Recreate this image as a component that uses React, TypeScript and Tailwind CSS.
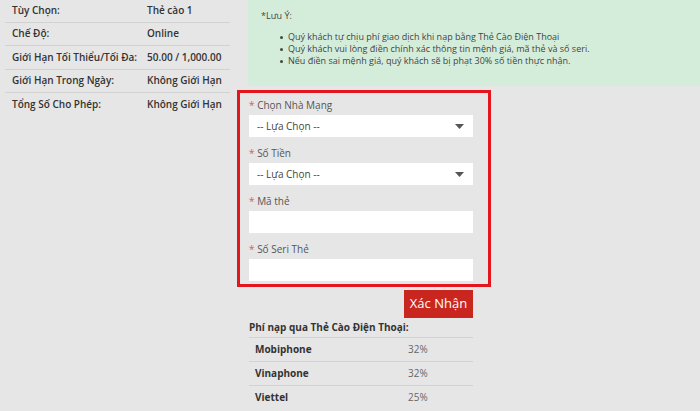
import React from "react";

const leftRows: [string, string][] = [
  ["Tùy Chọn:", "Thẻ cào 1"],
  ["Chế Độ:", "Online"],
  ["Giới Hạn Tối Thiểu/Tối Đa:", "50.00 / 1,000.00"],
  ["Giới Hạn Trong Ngày:", "Không Giới Hạn"],
  ["Tổng Số Cho Phép:", "Không Giới Hạn"],
];

const notes = [
  "Quý khách tự chịu phí giao dịch khi nạp bằng Thẻ Cào Điện Thoại",
  "Quý khách vui lòng điền chính xác thông tin mệnh giá, mã thẻ và số seri.",
  "Nếu điền sai mệnh giá, quý khách sẽ bị phạt 30% số tiền thực nhận.",
];

const fees: [string, string][] = [
  ["Mobiphone", "32%"],
  ["Vinaphone", "32%"],
  ["Viettel", "25%"],
];

function Label({ text }: { text: string }) {
  return (
    <div className="h-4 leading-4 text-[10px] text-[#555]">
      <span className="text-[#e05a5a]">*</span> {text}
    </div>
  );
}

function Select() {
  return (
    <div className="mt-[2px] h-[22px] w-[224px] bg-white flex items-center justify-between pl-[8px] pr-[9px] text-[10px] text-[#444]">
      <span>-- Lựa Chọn --</span>
      <svg width="9" height="5" viewBox="0 0 9 5">
        <path d="M0 0 L9 0 L4.5 5 Z" fill="#555" />
      </svg>
    </div>
  );
}

function Input() {
  return <div className="mt-[2px] h-[22px] w-[224px] bg-white" />;
}

export default function App() {
  return (
    <div className="w-[700px] h-[411px] overflow-hidden bg-[#e6e6e6] flex font-['Open_Sans',sans-serif] text-[#333]">
      <div className="w-[230px] shrink-0 pl-[5px]">
        {leftRows.map(([a, b], i) => (
          <div
            key={i}
            className={
              i === 0
                ? "flex items-center h-[22.5px] border-b border-[#d2d2d2] pl-[7px] text-[10px] font-semibold"
                : i < 4
                ? "flex items-center h-[23.5px] border-b border-[#d2d2d2] pl-[7px] text-[10px] font-semibold"
                : "flex items-center h-[23.5px] pl-[7px] text-[10px] font-semibold"
            }
          >
            <span className="w-[135px] shrink-0">{a}</span>
            <span>{b}</span>
          </div>
        ))}
      </div>
      <div className="flex-1 flex flex-col">
        <div className="ml-[18px] h-[86px] bg-[#d4edda] pl-[13px] pt-[8px] text-[9px] text-[#444]">
          <div className="h-4 leading-4">*Lưu Ý:</div>
          <div className="mt-[7px]">
            {notes.map((n, i) => (
              <div key={i} className="flex items-center h-[12px] leading-[12px]">
                <span className="ml-[19px] w-[3px] h-[3px] rounded-full bg-[#444] shrink-0" />
                <span className="ml-[5px]">{n}</span>
              </div>
            ))}
          </div>
        </div>
        <div className="ml-[7px] mt-[4px] w-[254px] border-[3px] border-[#e3161d] pt-[4px] pl-[9px] pb-[3px]">
          <Label text="Chọn Nhà Mạng" />
          <Select />
          <div className="mt-[8px]">
            <Label text="Số Tiền" />
            <Select />
          </div>
          <div className="mt-[8px]">
            <Label text="Mã thẻ" />
            <Input />
          </div>
          <div className="mt-[8px]">
            <Label text="Số Seri Thẻ" />
            <Input />
          </div>
        </div>
        <div className="ml-[19px] w-[224px] flex flex-col">
          <button className="self-end mt-[3px] h-[28px] w-[69px] bg-[#c8261f] text-white text-[13px] flex items-center justify-center">
            Xác Nhận
          </button>
          <div className="h-[19px] leading-[19px] text-[10px] font-bold">
            Phí nạp qua Thẻ Cào Điện Thoại:
          </div>
          {fees.map(([n, v], i) => (
            <div key={i} className="flex items-center h-[24px] border-t border-[#d2d2d2] pl-[6px] text-[10px]">
              <span className="w-[153px] shrink-0 font-bold">{n}</span>
              <span className="text-[#666]">{v}</span>
            </div>
          ))}
        </div>
      </div>
    </div>
  );
}
